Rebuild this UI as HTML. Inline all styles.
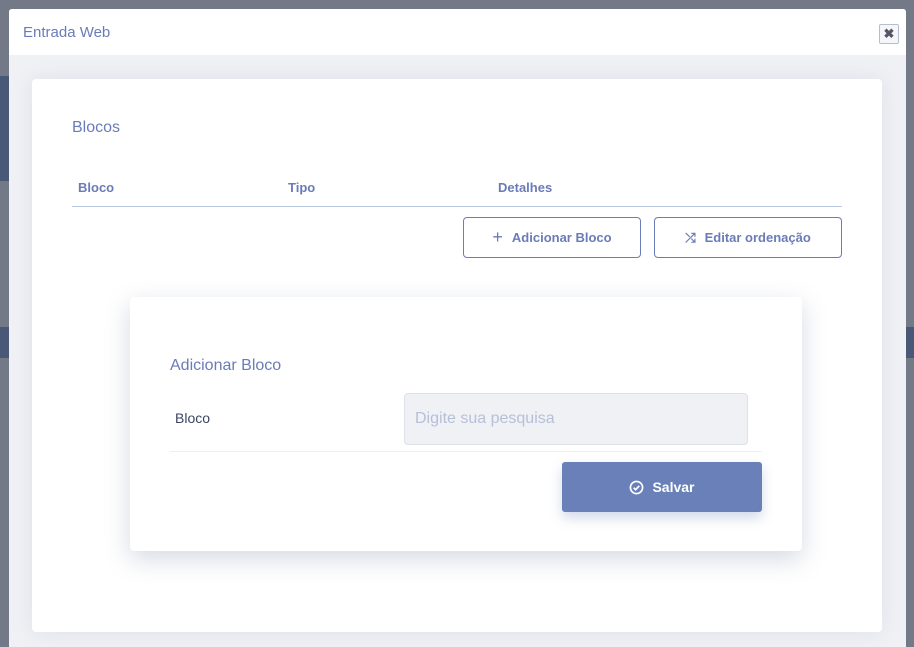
<!DOCTYPE html>
<html style="overflow:hidden;height:647px"><head><meta charset="utf-8"><style>
*{box-sizing:border-box;margin:0;padding:0}
body{width:914px;height:647px;overflow:hidden;background:#737987;position:relative;font-family:"Liberation Sans",sans-serif}
.abs{position:absolute}
.dark{background:#4a5878}
.modal{left:9px;top:9px;width:897px;height:638px;background:#f0f1f5;border-radius:3px 3px 0 0;overflow:hidden}
.hdr{left:0;top:0;width:897px;height:46px;background:#fff}
.title{left:14px;top:15px;font-size:15px;color:#6a7cb8}
.close{left:870px;top:15px;width:20px;height:20px;border:1px solid #b5bdcf;border-radius:2px;background:#f5f6f9;color:#556;font-size:13px;font-weight:bold;text-align:center;line-height:18px}
.card{left:23px;top:70px;width:850px;height:553px;background:#fff;border-radius:4px;box-shadow:0 0 20px rgba(150,160,190,.2)}
.t{color:#6a7cb8}
.th{font-weight:bold;font-size:13px;color:#6a7cb8}
.btn{border:1px solid #6a7cb8;border-radius:4px;background:#fff;color:#6a7cb8;font-weight:bold;font-size:13px;display:flex;align-items:center;justify-content:center;gap:9px}
.inner{left:98px;top:218px;width:672px;height:254px;background:#fff;border-radius:4px;box-shadow:0 8px 25px rgba(120,130,160,.3)}
</style></head><body>
<div class="abs dark" style="left:0;top:76px;width:9px;height:105px"></div>
<div class="abs dark" style="left:0;top:327px;width:9px;height:31px"></div>
<div class="abs dark" style="left:906px;top:327px;width:8px;height:31px"></div>
<div class="abs modal">
 <div class="abs hdr"></div>
 <div class="abs title">Entrada Web</div>
 <div class="abs close">✖</div>
 <div class="abs card">
  <div class="abs t" style="left:40px;top:40px;font-size:16px">Blocos</div>
  <div class="abs th" style="left:46px;top:101px">Bloco</div>
  <div class="abs th" style="left:256px;top:101px">Tipo</div>
  <div class="abs th" style="left:466px;top:101px">Detalhes</div>
  <div class="abs" style="left:40px;top:127px;width:770px;height:1px;background:#b8c6e0"></div>
  <div class="abs btn" style="left:431px;top:138px;width:178px;height:41px"><span style="font-size:18px;font-weight:normal">+</span>Adicionar Bloco</div>
  <div class="abs btn" style="left:622px;top:138px;width:188px;height:41px"><span style="font-size:13px">⤮</span>Editar ordenação</div>
  <div class="abs inner">
   <div class="abs t" style="left:40px;top:60px;font-size:16px">Adicionar Bloco</div>
   <div class="abs" style="left:45px;top:113px;font-size:14px;color:#3c4560">Bloco</div>
   <div class="abs" style="left:274px;top:96px;width:344px;height:52px;background:#f0f1f5;border:1px solid #dde1ea;border-radius:4px;color:#b5c0d8;font-size:16px;padding:16px 10px">Digite sua pesquisa</div>
   <div class="abs" style="left:40px;top:154px;width:592px;height:1px;background:#eceef2"></div>
   <div class="abs" style="left:432px;top:165px;width:200px;height:50px;background:#6a80b8;border-radius:3px;color:#fff;font-weight:bold;font-size:14px;display:flex;align-items:center;justify-content:center;gap:8px;box-shadow:0 6px 12px rgba(106,128,184,.3)">
    <svg width="15" height="15" viewBox="0 0 16 16"><circle cx="8" cy="8" r="6.5" fill="none" stroke="#fff" stroke-width="1.8"/><path d="M5 8.3l2 2 4-4" fill="none" stroke="#fff" stroke-width="1.8"/></svg>Salvar</div>
  </div>
 </div>
</div>
</body></html>
